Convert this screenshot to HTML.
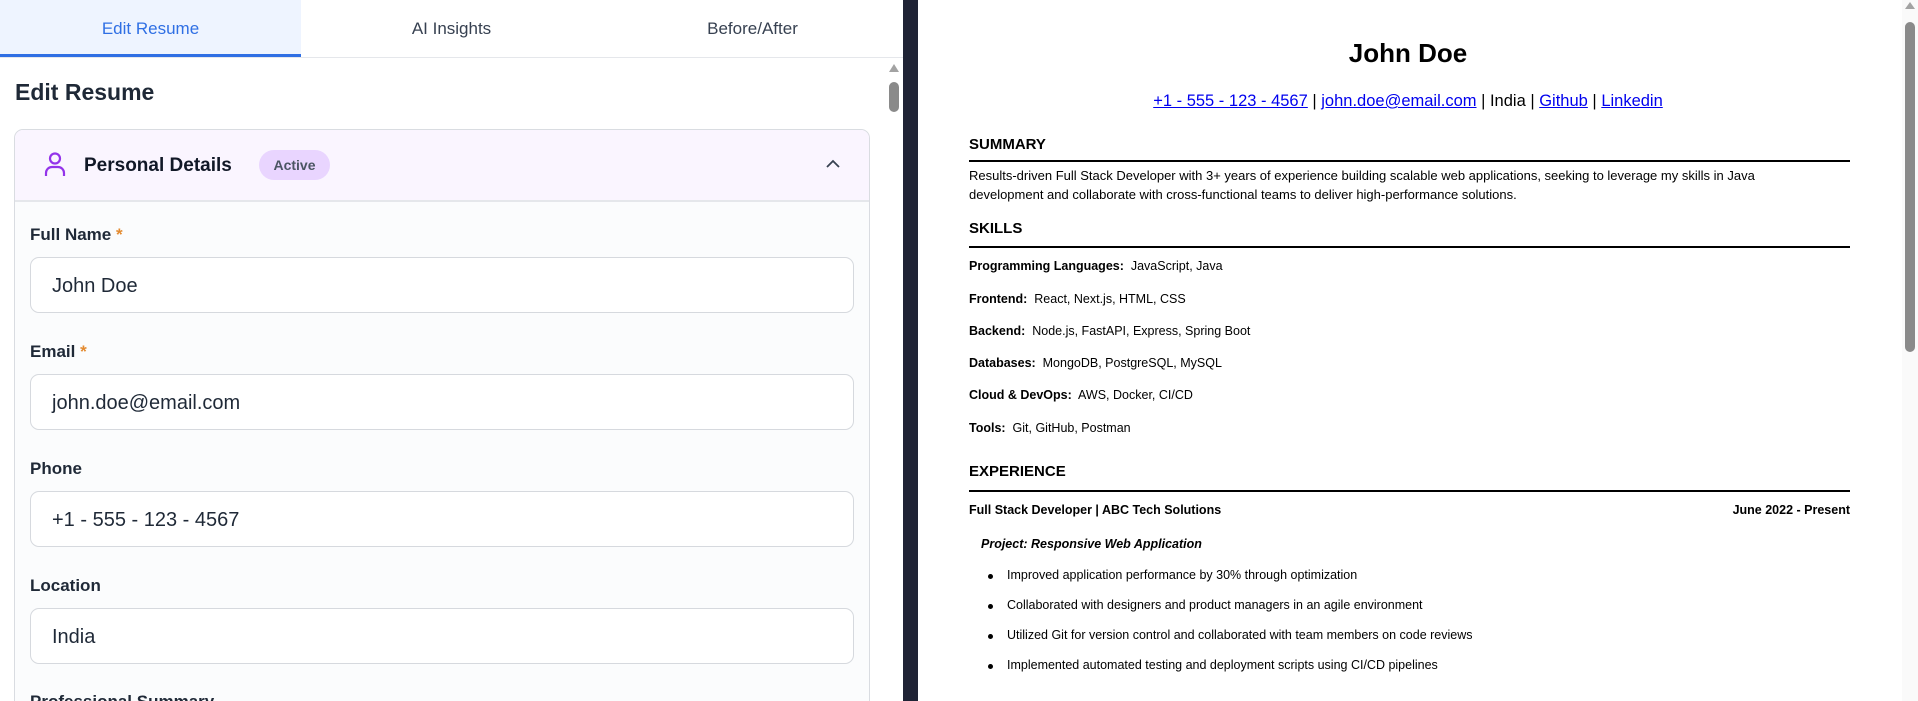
<!DOCTYPE html>
<html><head><meta charset="utf-8"><style>
*{margin:0;padding:0;box-sizing:border-box}
body{width:1918px;height:701px;overflow:hidden;background:#1f2335;font-family:"Liberation Sans",sans-serif;position:relative}
.abs{position:absolute}
#left{left:0;top:0;width:903px;height:701px;background:#fff;overflow:hidden}
.tab{position:absolute;top:0;height:57px;line-height:57px;text-align:center;font-size:17px;color:#374151}
.lbl{position:absolute;left:30px;font-size:17px;font-weight:bold;color:#1f2937}
.star{color:#e38a2f}
.inp{position:absolute;left:30px;width:824px;height:56px;border:1px solid #d6d9de;border-radius:9px;background:#fff;font-size:20px;color:#1f2937;padding-left:21px;line-height:56px}
#right{left:918px;top:0;width:1000px;height:701px;background:#fff;color:#000}
.h{position:absolute;left:51px;font-size:15px;font-weight:bold}
.rule{position:absolute;left:51px;width:881px;height:1.5px;background:#000}
.t{position:absolute;left:51px;font-size:12.5px;white-space:nowrap}
.li{position:absolute;left:89px;font-size:12.5px;white-space:nowrap}
.li:before{content:"";position:absolute;left:-19px;top:6px;width:5px;height:5px;border-radius:50%;background:#000}
a{color:#00e;text-decoration:underline}
</style></head><body>
<div id="left" class="abs">
  <div class="tab" style="left:0;width:301px;background:#eef4ff;color:#2f6fe4;border-bottom:3px solid #2f6fe4;line-height:57px;height:57px">Edit Resume</div>
  <div class="tab" style="left:301px;width:301px">AI Insights</div>
  <div class="tab" style="left:602px;width:301px">Before/After</div>
  <div class="abs" style="left:0;top:57px;width:903px;height:1px;background:#e5e7eb"></div>
  <div class="abs" style="left:15px;top:79px;font-size:23px;font-weight:bold;color:#1f2937">Edit Resume</div>
  <div class="abs" style="left:889px;top:64px;width:0;height:0;border-left:5px solid transparent;border-right:5px solid transparent;border-bottom:8px solid #a3a3a3"></div>
  <div class="abs" style="left:889px;top:82px;width:10px;height:30px;border-radius:5px;background:#8a8a8a"></div>
  <div class="abs" style="left:14px;top:129px;width:856px;height:600px;border:1px solid #d9dce1;border-radius:9px;background:#fbfcfd;overflow:hidden">
    <div style="height:72px;background:#faf5ff;border-bottom:2px solid #e5e7eb;position:relative">
      <svg class="abs" style="left:29px;top:22px" width="22" height="25" viewBox="0 0 22 25" fill="none" stroke="#9333ea" stroke-width="2.2"><circle cx="11" cy="6.5" r="5"/><path d="M2 24v-3a6 6 0 0 1 6-6h6a6 6 0 0 1 6 6v3"/></svg>
      <div class="abs" style="left:69px;top:25px;font-size:19px;font-weight:bold;color:#111827">Personal Details</div>
      <div class="abs" style="left:244px;top:20px;width:71px;height:30px;border-radius:15px;background:#e9d5ff;color:#4b5563;font-size:14px;font-weight:bold;text-align:center;line-height:30px">Active</div>
      <svg class="abs" style="left:810px;top:28px" width="16" height="12" viewBox="0 0 16 12" fill="none" stroke="#374151" stroke-width="1.8"><path d="M2 9l6-6 6 6"/></svg>
    </div>
  </div>
  <div class="lbl" style="top:225px">Full Name <span class="star">*</span></div>
  <div class="inp" style="top:257px">John Doe</div>
  <div class="lbl" style="top:342px">Email <span class="star">*</span></div>
  <div class="inp" style="top:374px">john.doe@email.com</div>
  <div class="lbl" style="top:459px">Phone</div>
  <div class="inp" style="top:491px">+1 - 555 - 123 - 4567</div>
  <div class="lbl" style="top:576px">Location</div>
  <div class="inp" style="top:608px">India</div>
  <div class="lbl" style="top:692px">Professional Summary</div>
</div>
<div id="right" class="abs">
  <div class="abs" style="left:0;width:980px;top:38px;text-align:center;font-size:26px;font-weight:bold">John Doe</div>
  <div class="abs" style="left:0;width:980px;top:92px;text-align:center;font-size:16.5px"><a>+1 - 555 - 123 - 4567</a> | <a>john.doe@email.com</a> | India | <a>Github</a> | <a>Linkedin</a></div>
  <div class="h" style="top:136px">SUMMARY</div>
  <div class="rule" style="top:160px"></div>
  <div class="t" style="top:166px;line-height:19px;font-size:13px">Results-driven Full Stack Developer with 3+ years of experience building scalable web applications, seeking to leverage my skills in Java<br>development and collaborate with cross-functional teams to deliver high-performance solutions.</div>
  <div class="h" style="top:220px">SKILLS</div>
  <div class="rule" style="top:246px"></div>
  <div class="t" style="top:259px"><b>Programming Languages:</b>&nbsp; JavaScript, Java</div>
  <div class="t" style="top:292px"><b>Frontend:</b>&nbsp; React, Next.js, HTML, CSS</div>
  <div class="t" style="top:324px"><b>Backend:</b>&nbsp; Node.js, FastAPI, Express, Spring Boot</div>
  <div class="t" style="top:356px"><b>Databases:</b>&nbsp; MongoDB, PostgreSQL, MySQL</div>
  <div class="t" style="top:388px"><b>Cloud &amp; DevOps:</b>&nbsp; AWS, Docker, CI/CD</div>
  <div class="t" style="top:421px"><b>Tools:</b>&nbsp; Git, GitHub, Postman</div>
  <div class="h" style="top:463px">EXPERIENCE</div>
  <div class="rule" style="top:490px"></div>
  <div class="t" style="top:503px;font-weight:bold">Full Stack Developer | ABC Tech Solutions</div>
  <div class="t" style="top:503px;left:auto;right:68px;font-weight:bold">June 2022 - Present</div>
  <div class="t" style="top:537px;left:63px;font-weight:bold;font-style:italic">Project: Responsive Web Application</div>
  <div class="li" style="top:568px">Improved application performance by 30% through optimization</div>
  <div class="li" style="top:598px">Collaborated with designers and product managers in an agile environment</div>
  <div class="li" style="top:628px">Utilized Git for version control and collaborated with team members on code reviews</div>
  <div class="li" style="top:658px">Implemented automated testing and deployment scripts using CI/CD pipelines</div>
  <div class="abs" style="left:984px;top:0;width:16px;height:701px;background:#fafafa"></div>
  <div class="abs" style="left:987px;top:2px;width:0;height:0;border-left:5px solid transparent;border-right:5px solid transparent;border-bottom:7px solid #a3a3a3"></div>
  <div class="abs" style="left:987px;top:22px;width:10px;height:330px;border-radius:5px;background:#8a8a8a"></div>
</div>
</body></html>
